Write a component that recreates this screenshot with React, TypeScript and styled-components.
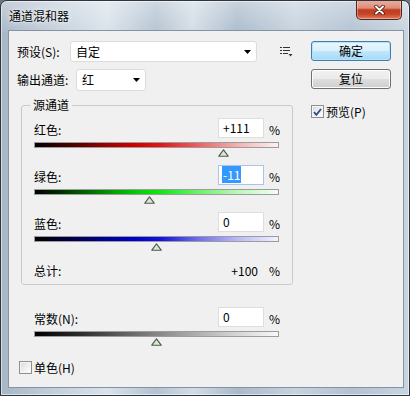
import React from "react";
import styled, { createGlobalStyle } from "styled-components";

const FONT = `"Noto Sans CJK SC", "Microsoft YaHei", sans-serif`;

const Global = createGlobalStyle`
  html, body { margin: 0; padding: 0; background: #6b7580; }
  body { font-family: ${FONT}; font-size: 12px; color: #000; }
  * { box-sizing: border-box; }
`;

const Window = styled.div`
  width: 410px;
  height: 396px;
  display: flex;
  flex-direction: column;
  padding: 0 5px 7px 7px;
  border: 1px solid #2f353c;
  border-radius: 7px 7px 0 0;
  background:
    linear-gradient(180deg, rgba(255,255,255,0.35) 0px, rgba(255,255,255,0.05) 30px, rgba(0,0,0,0) 31px),
    linear-gradient(90deg, #a7b6c6 0%, #c4d0dc 14%, #d9e2ea 26%, #b3c2d1 38%, #d2dce6 47%, #a9bacb 58%, #c6d2de 72%, #b2c2d2 86%, #c8d4e0 100%);
  box-shadow: inset 0 0 0 1px rgba(255, 255, 255, 0.55);
  overflow: hidden;
`;

const TitleBar = styled.div`
  height: 29px;
  flex: none;
  display: flex;
  justify-content: space-between;
  align-items: flex-start;
  padding-left: 1px;
`;

const TitleText = styled.span`
  margin-top: 7px;
  font-size: 12px;
  line-height: 16px;
  color: #000;
  text-shadow: 0 0 6px rgba(255, 255, 255, 0.9), 0 0 2px rgba(255, 255, 255, 0.9);
`;

const CloseButton = styled.div`
  width: 46px;
  height: 20px;
  margin-right: 2px;
  margin-top: -1px;
  display: flex;
  align-items: center;
  justify-content: center;
  border: 1px solid #5a2117;
  border-top: none;
  border-radius: 0 0 5px 5px;
  background: linear-gradient(180deg, #eab0a2 0%, #dd8e7a 42%, #c23a1f 52%, #c54628 75%, #dd7d5e 100%);
  box-shadow: inset 0 0 0 1px rgba(255, 255, 255, 0.35);
`;

const Content = styled.div`
  flex: 1;
  background: #f0f0f0;
  border: 1px solid #8593a3;
  display: grid;
  grid-template-columns: 276px 80px;
  column-gap: 18px;
  align-items: start;
  padding: 10px 0 0 8px;
`;

const LeftCol = styled.div`
  display: flex;
  flex-direction: column;
`;

const Row = styled.div<{ $h: number; $mt?: number }>`
  display: flex;
  align-items: center;
  height: ${(p) => p.$h}px;
  margin-top: ${(p) => p.$mt ?? 0}px;
`;

const Label = styled.span<{ $w: number }>`
  flex: none;
  width: ${(p) => p.$w}px;
  line-height: 16px;
  white-space: nowrap;
`;

const SelectBox = styled.div<{ $w: number }>`
  width: ${(p) => p.$w}px;
  height: 100%;
  background: #fff;
  border: 1px solid #dcdcdc;
  border-radius: 3px;
  display: flex;
  align-items: center;
  justify-content: space-between;
  padding: 0 5px 0 5px;
  line-height: 16px;
`;

const MenuIcon = styled.span`
  margin-left: 23px;
  display: inline-flex;
`;

const Group = styled.fieldset`
  margin: 7px 0 0 4px;
  width: 272px;
  min-width: 0;
  padding: 0 13px 5px 12px;
  border: 1px solid #cacaca;
  border-radius: 3px;
`;

const Legend = styled.legend`
  padding: 0 3px;
  margin-left: -4px;
  line-height: 14px;
`;

const Block = styled.div<{ $mt?: number }>`
  margin-top: ${(p) => p.$mt ?? 0}px;
`;

const FieldRow = styled.div`
  display: flex;
  align-items: center;
  height: 20px;
`;

const FieldLabel = styled.span`
  flex: 1;
  line-height: 16px;
  padding-top: 3px;
  white-space: nowrap;
`;

const NumBox = styled.div<{ $focus?: boolean }>`
  flex: none;
  width: 46px;
  height: 20px;
  background: #fff;
  border: 1px solid ${(p) => (p.$focus ? "#a7c6e6" : "#dedede")};
  padding-left: 4px;
  line-height: 18px;
  font-size: 12px;
`;

const Selected = styled.span`
  background: #3399ff;
  color: #fff;
  padding: 0 1px;
  margin-left: -1px;
`;

const Pct = styled.span`
  flex: none;
  width: 15px;
  padding-left: 5px;
  padding-top: 3px;
  line-height: 16px;
`;

const TotalValue = styled.span`
  margin-right: 6px;
  padding-top: 3px;
  line-height: 16px;
`;

const Track = styled.div<{ $bg: string; $mb: number }>`
  position: relative;
  margin-top: 4px;
  margin-bottom: ${(p) => p.$mb}px;
  height: 6px;
  border: 1px solid #9c9c9c;
  background: ${(p) => p.$bg};
`;

const Thumb = styled.span`
  position: absolute;
  top: calc(100% + 2px);
  width: 11px;
  height: 8px;
  margin-left: -5.5px;
  display: flex;
`;

const ConstBlock = styled.div`
  margin-top: 22px;
  padding: 0 14px 0 17px;
`;

const CheckRow = styled.label<{ $mt: number; $pl?: number }>`
  display: flex;
  align-items: center;
  height: 17px;
  margin-top: ${(p) => p.$mt}px;
  padding-left: ${(p) => p.$pl ?? 0}px;
  gap: 2px;
  line-height: 16px;
`;

const CheckBox = styled.span`
  flex: none;
  width: 13px;
  height: 13px;
  border: 1px solid #8f8f8f;
  background: linear-gradient(135deg, #d6d9de 0%, #eef0f2 55%, #ffffff 100%);
  box-shadow: inset 0 0 0 1px #f4f4f4;
  display: inline-flex;
  align-items: center;
  justify-content: center;
`;

const RightCol = styled.div`
  display: flex;
  flex-direction: column;
`;

const Btn = styled.div<{ $primary?: boolean; $mt?: number }>`
  width: 80px;
  height: 20px;
  margin-top: ${(p) => p.$mt ?? 0}px;
  display: flex;
  align-items: center;
  justify-content: center;
  line-height: 16px;
  border-radius: 3px;
  border: 1px solid ${(p) => (p.$primary ? "#3c7fb1" : "#707070")};
  background: ${(p) =>
    p.$primary
      ? "linear-gradient(180deg, #eaf6fd 0%, #d9f0fc 48%, #bee6fd 52%, #a7d9f5 100%)"
      : "linear-gradient(180deg, #f2f2f2 0%, #ebebeb 48%, #dddddd 52%, #cfcfcf 100%)"};
  box-shadow: inset 0 0 0 1px ${(p) => (p.$primary ? "#b8e0f6" : "#fbfbfb")};
`;

const GRADS = {
  red: "linear-gradient(90deg, #000 0%, #4a0000 15%, #a00000 30%, #d40000 42%, #e21818 52%, #ec6666 68%, #f5b4b4 84%, #fdf0f0 100%)",
  green: "linear-gradient(90deg, #000 0%, #004400 15%, #009400 30%, #00d400 43%, #10ea10 52%, #6cf06c 67%, #baf6ba 83%, #f2fff2 100%)",
  blue: "linear-gradient(90deg, #000 0%, #00004a 15%, #00009a 30%, #0000d0 42%, #1414e0 52%, #6c6cf0 67%, #b8b8f8 83%, #f2f2ff 100%)",
  gray: "linear-gradient(90deg, #000 0%, #303030 20%, #707070 42%, #9a9a9a 58%, #cfcfcf 80%, #f8f8f8 100%)",
};

const ThumbIcon = () => (
  <svg width="11" height="8" viewBox="0 0 11 8">
    <path d="M5.5 0.8 L10.2 7.2 H0.8 Z" fill="#dbe7d6" stroke="#4f5a4f" strokeWidth="1.1" strokeLinejoin="round" />
  </svg>
);

const ArrowDown = () => (
  <svg width="7" height="4" viewBox="0 0 7 4">
    <path d="M0 0 H7 L3.5 4 Z" fill="#000" />
  </svg>
);

const Slider: React.FC<{ value: number; bg: string; mb: number }> = ({ value, bg, mb }) => (
  <Track $bg={bg} $mb={mb}>
    <Thumb style={{ left: `${((value + 200) / 400) * 100}%` }}>
      <ThumbIcon />
    </Thumb>
  </Track>
);

const sliders = [
  { label: "红色:", text: "+111", value: 111, bg: GRADS.red, focus: false },
  { label: "绿色:", text: "-11", value: -11, bg: GRADS.green, focus: true },
  { label: "蓝色:", text: "0", value: 0, bg: GRADS.blue, focus: false },
];

export default function App() {
  return (
    <>
      <Global />
      <Window>
        <TitleBar>
          <TitleText>通道混和器</TitleText>
          <CloseButton>
            <svg width="11" height="10" viewBox="0 0 11 10">
              <path d="M2 1.5 L9 8.5 M9 1.5 L2 8.5" stroke="#4a1a12" strokeWidth="3.6" strokeLinecap="round" />
              <path d="M2 1.5 L9 8.5 M9 1.5 L2 8.5" stroke="#ffffff" strokeWidth="1.9" strokeLinecap="round" />
            </svg>
          </CloseButton>
        </TitleBar>
        <Content>
          <LeftCol>
            <Row $h={21}>
              <Label $w={53}>预设(S):</Label>
              <SelectBox $w={187}>
                <span>自定</span>
                <ArrowDown />
              </SelectBox>
              <MenuIcon>
                <svg width="13" height="11" viewBox="0 0 13 11">
                  <rect x="0" y="1" width="2" height="1" fill="#333" />
                  <rect x="3" y="1" width="7" height="1" fill="#333" />
                  <rect x="0" y="4" width="2" height="1" fill="#333" />
                  <rect x="3" y="4" width="7" height="1" fill="#333" />
                  <rect x="0" y="7" width="2" height="1" fill="#333" />
                  <rect x="3" y="7" width="5" height="1" fill="#333" />
                  <path d="M8.5 8 H12.5 L10.5 10.5 Z" fill="#333" />
                </svg>
              </MenuIcon>
            </Row>
            <Row $h={22} $mt={7}>
              <Label $w={59}>输出通道:</Label>
              <SelectBox $w={70}>
                <span>红</span>
                <ArrowDown />
              </SelectBox>
            </Row>
            <Group>
              <Legend>源通道</Legend>
              {sliders.map((s, i) => (
                <Block key={s.label} $mt={i === 0 ? 6 : 0}>
                  <FieldRow>
                    <FieldLabel>{s.label}</FieldLabel>
                    <NumBox $focus={s.focus}>{s.focus ? <Selected>{s.text}</Selected> : s.text}</NumBox>
                    <Pct>%</Pct>
                  </FieldRow>
                  <Slider value={s.value} bg={s.bg} mb={17} />
                </Block>
              ))}
              <Block $mt={6}>
                <FieldRow>
                  <FieldLabel>总计:</FieldLabel>
                  <TotalValue>+100</TotalValue>
                  <Pct>%</Pct>
                </FieldRow>
              </Block>
            </Group>
            <ConstBlock>
              <FieldRow>
                <FieldLabel>常数(N):</FieldLabel>
                <NumBox>0</NumBox>
                <Pct>%</Pct>
              </FieldRow>
              <Slider value={0} bg={GRADS.gray} mb={10} />
            </ConstBlock>
            <CheckRow $mt={12} $pl={2}>
              <CheckBox />
              <span>单色(H)</span>
            </CheckRow>
          </LeftCol>
          <RightCol>
            <Btn $primary>确定</Btn>
            <Btn $mt={8}>复位</Btn>
            <CheckRow $mt={14}>
              <CheckBox>
                <svg width="9" height="8" viewBox="0 0 9 8">
                  <path d="M1 4.2 L3.4 6.8 L8 1" fill="none" stroke="#2f4a86" strokeWidth="1.8" />
                </svg>
              </CheckBox>
              <span>预览(P)</span>
            </CheckRow>
          </RightCol>
        </Content>
      </Window>
    </>
  );
}
